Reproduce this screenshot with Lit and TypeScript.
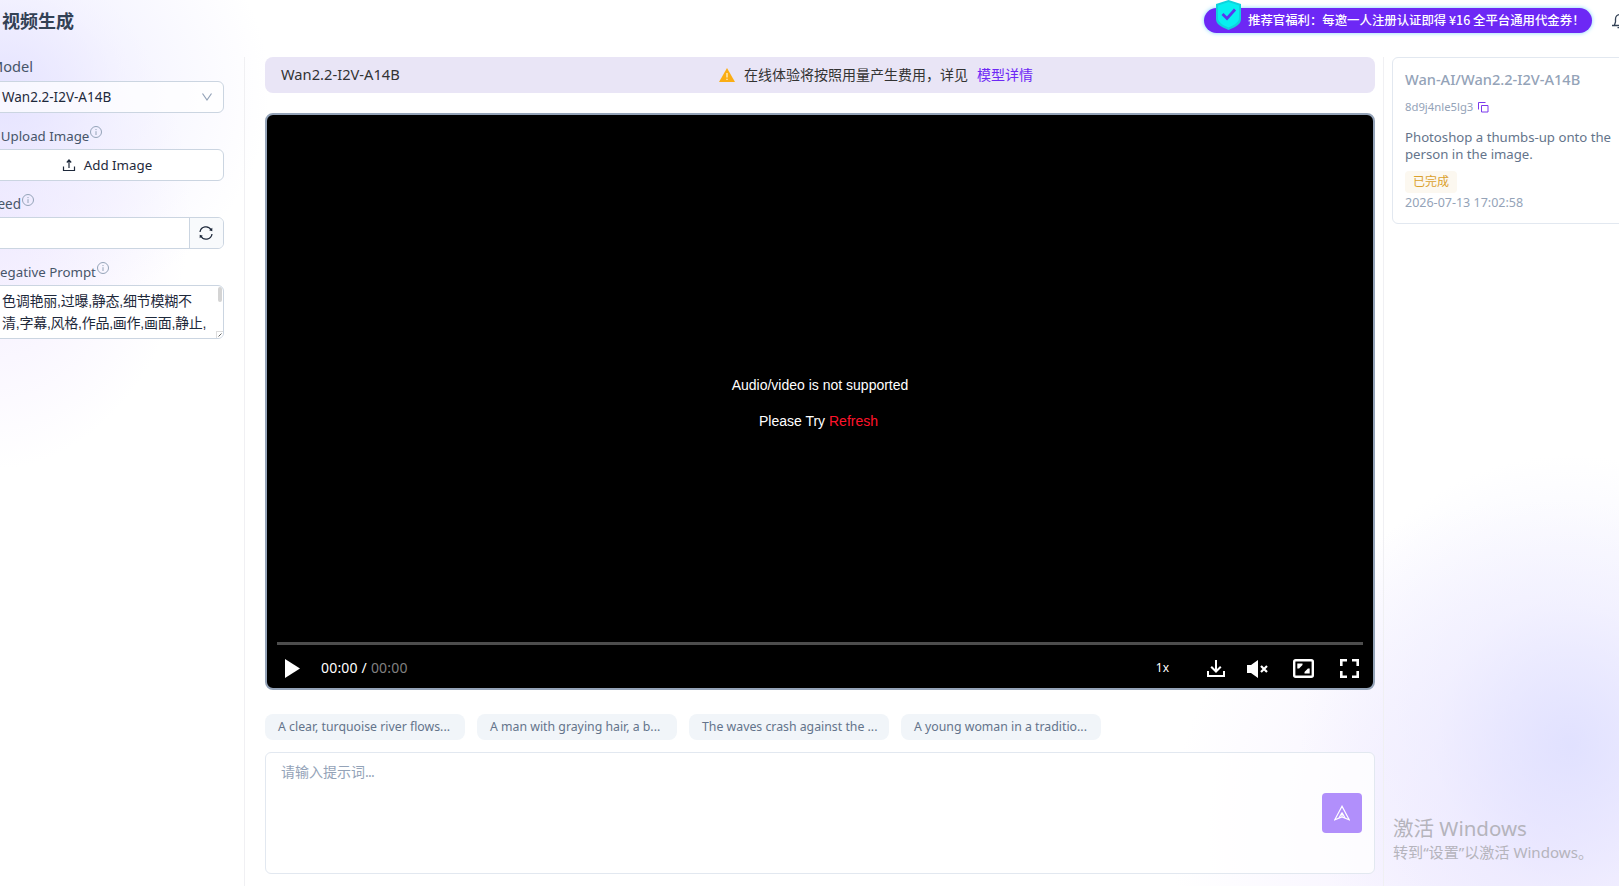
import { LitElement, html, css } from "lit";
import { customElement, property } from "lit/decorators.js";

const infoIcon = html`<svg class="info" viewBox="0 0 12 12" fill="none" stroke="#94a3b8">
  <circle cx="6" cy="6" r="5.5"></circle>
  <path d="M6 5.2V9M6 3v1.1"></path>
</svg>`;

@customElement("side-panel")
class SidePanel extends LitElement {
  static styles = css`
    :host { display: block; }
    .form { display: flex; flex-direction: column; margin-left: -10px; width: 234px; }
    .label { height: 24px; display: flex; align-items: flex-start; font-size: 13.3px; line-height: 22px; color: #475569; white-space: pre; }
    .label.first { font-size: 14.6px; line-height: 18px; }
    .label.seedlabel { font-size: 13.5px; }
    .info { width: 12px; height: 12px; margin: 1px 0 0 1px; }
    .control { box-sizing: border-box; height: 32px; border: 1px solid #cbd5e1; border-radius: 6px; display: flex; align-items: center; margin-bottom: 12px; color: #1e293b; font-size: 13.5px; }
    .select { padding: 0 10px 0 11px; justify-content: space-between; background: rgba(255, 255, 255, 0.7); }
    .chev { width: 12px; height: 10px; }
    .button { background: #fff; justify-content: center; gap: 8px; font-size: 13.3px; line-height: 30px; padding-bottom: 1px; }
    .up { width: 14px; height: 14px; }
    .seed { background: #fff; justify-content: flex-end; overflow: hidden; }
    .refresh { width: 33px; height: 30px; border-left: 1px solid #cbd5e1; background: #f8fafc; display: flex; align-items: center; justify-content: center; }
    .refresh svg { width: 16px; height: 16px; margin-right: 2px; }
    .area { position: relative; box-sizing: border-box; height: 54px; border: 1px solid #cbd5e1; border-radius: 6px; background: #fff; padding: 4px 11px; font-size: 14px; line-height: 22px; color: #1e293b; white-space: pre; font-family: "Liberation Sans", "Noto Sans CJK SC", sans-serif; letter-spacing: -0.25px; overflow: hidden; }
    .thumb { position: absolute; right: 1px; top: 1px; width: 4px; height: 15px; border-radius: 2px; background: #d4d4d4; }
    .grip { position: absolute; right: 0; bottom: 0; width: 6px; height: 6px; background: #fff; border: 1px solid #ddd; border-width: 1px 0 0 1px; }
    .grip svg { display: block; width: 5px; height: 5px; }
  `;
  render() {
    return html`<div class="form">
      <div class="label first"><span>Model</span></div>
      <div class="control select"><span>Wan2.2-I2V-A14B</span>
        <svg class="chev" viewBox="0 0 12 10" fill="none" stroke="#94a3b8" stroke-width="1.2"><path d="M1.5 1.5 6 8l4.500-6.500"></path></svg>
      </div>
      <div class="label"><span>* Upload Image</span>${infoIcon}</div>
      <div class="control button">
        <svg class="up" viewBox="0 0 14 14" fill="none" stroke="#1e293b" stroke-width="1.200"><path d="M1.500 8.500v4h11v-4M7 10V2.500M4.800 4.500 7 2l2.200 2.500"></path></svg>
        <span>Add Image</span>
      </div>
      <div class="label seedlabel"><span>Seed</span>${infoIcon}</div>
      <div class="control seed"><div class="refresh">
        <svg viewBox="0 0 16 16" fill="none" stroke="#1e293b" stroke-width="1.300"><path d="M2 7a6 6 0 0 1 11.200-2M14 9a6 6 0 0 1-11.200 2"></path><path d="M14.300 2.800v3.400l-3.100-.9zM1.700 13.200V9.800l3.100.9z" fill="#1e293b" stroke="none"></path></svg>
      </div></div>
      <div class="label"><span>Negative Prompt</span>${infoIcon}</div>
      <div class="area">色调艳丽,过曝,静态,细节模糊不
清,字幕,风格,作品,画作,画面,静止,<div class="thumb"></div><div class="grip"><svg viewBox="0 0 5 5"><path d="m1.500 4.500 3-3" stroke="#666"></path></svg></div></div>
    </div>`;
  }
}

@customElement("video-player")
class VideoPlayer extends LitElement {
  static styles = css`
    :host { display: flex; flex-direction: column; box-sizing: border-box; height: 577px; border: 2px solid #94a3b8; border-radius: 8px; background: #000; overflow: hidden; color: #fff; }
    .message { flex: 1; display: flex; flex-direction: column; align-items: center; padding-top: 252px; font: 14px/36px "Liberation Sans", sans-serif; }
    .refresh { color: #ff142b; }
    .retry { margin-left: -3px; }
    .track { height: 3px; margin: 0 10px; background: #4d4d4d; }
    .controls { height: 43px; display: flex; align-items: center; padding: 4px 14px 0 18px; box-sizing: border-box; }
    .controls svg { flex: none; }
    .time { margin: -2px auto 0 21px; font-size: 14px; letter-spacing: 0.2px; }
    .total { color: #808080; }
    .speed { font-size: 12px; margin: -3px 38px 0 0; }
    .download { margin-right: 22px; }
    .mute { margin-right: 25px; }
    .web { margin-right: 26px; }
  `;
  render() {
    return html`
      <div class="message"><div>Audio/video is not supported</div><div class="retry">Please Try <span class="refresh">Refresh</span></div></div>
      <div class="track"></div>
      <div class="controls">
        <svg width="15" height="19" viewBox="0 0 15 19"><path d="M0 0 15 9.500 0 19z" fill="#fff"></path></svg>
        <div class="time">00:00 / <span class="total">00:00</span></div>
        <span class="speed">1x</span>
        <svg class="download" width="18" height="17" viewBox="0 0 18 17" fill="none" stroke="#fff" stroke-width="2"><path d="M1 11v5h16v-5M9 0v11M4.200 6.800 9 11.500l4.800-4.700"></path></svg>
        <svg class="mute" width="21" height="18" viewBox="0 0 21 18"><path d="M0 5h4l7-5v18l-7-5H0z" fill="#fff"></path><path d="m14 6 6 6m0-6-6 6" stroke="#fff" stroke-width="2.200"></path></svg>
        <svg class="web" width="21" height="19" viewBox="0 0 21 19"><rect x="1.200" y="1.200" width="18.600" height="16.600" rx="1.500" fill="none" stroke="#fff" stroke-width="2.400"></rect><path d="M4.300 4.500h5.200v1.500l-3.400 3.500H4.300zM16.700 14.500h-5.200V13l3.400-3.500h1.800z" fill="#fff"></path></svg>
        <svg width="19" height="19" viewBox="0 0 19 19" fill="none" stroke="#fff" stroke-width="2.600"><path d="M1.300 7V1.300H7M12 1.300h5.700V7M17.700 12v5.700H12M7 17.700H1.300V12"></path></svg>
      </div>`;
  }
}

@customElement("prompt-chip")
class PromptChip extends LitElement {
  @property() text = "";
  static styles = css`
    :host { box-sizing: border-box; width: 200px; height: 26px; border-radius: 8px; background: #f1f5f9; padding: 0 12px 0 13px; font-size: 12.3px; line-height: 25px; color: #64748b; white-space: pre; }
  `;
  render() { return html`${this.text}`; }
}

@customElement("history-card")
class HistoryCard extends LitElement {
  static styles = css`
    :host { display: flex; flex-direction: column; align-items: flex-start; box-sizing: border-box; width: 260px; height: 167px; border: 1px solid #e2e8f0; border-radius: 6px; background: #fff; padding: 10px 12px; color: #94a3b8; white-space: pre; }
    .title { font-size: 14.6px; line-height: 22px; font-weight: 500; }
    .id { display: flex; align-items: center; gap: 5px; font-size: 11.3px; line-height: 16px; margin-top: 9px; }
    .desc { font-size: 13.200px; line-height: 17px; color: #64748b; margin-top: 14px; }
    .tag { background: #fcf8f0; color: #dba12d; font-size: 12px; line-height: 22px; height: 22px; padding: 0 8px; border-radius: 4px; margin-top: 8px; }
    .date { font-size: 12.5px; line-height: 16px; margin-top: 2px; }
  `;
  render() {
    return html`
      <div class="title">Wan-AI/Wan2.2-I2V-A14B</div>
      <div class="id"><span>8d9j4nle5lg3</span>
        <svg width="11" height="11" viewBox="0 0 11 11" fill="none" stroke="#7c3aed"><path d="M3.500 3.500h6.500v6.500H3.500zM.5 7.500v-7h7"></path></svg></div>
      <div class="desc">Photoshop a thumbs-up onto the
person in the image.</div>
      <div class="tag">已完成</div>
      <div class="date">2026-07-13 17:02:58</div>`;
  }
}

@customElement("app-root")
class AppRoot extends LitElement {
  static styles = css`
    :host {
      display: grid; grid-template-columns: 245px 1139px 235px; grid-template-rows: 57px 829px;
      position: relative; width: 1619px; height: 886px; overflow: hidden;
      font-family: "Noto Sans", "Noto Sans CJK SC", sans-serif;
      background:
        radial-gradient(ellipse 270px 230px at 0px 90px, rgba(222, 221, 255, 0.75), rgba(232, 231, 255, 0.45) 45%, rgba(255, 255, 255, 0) 100%),
        radial-gradient(ellipse 200px 260px at -10px 210px, rgba(238, 228, 255, 0.7), rgba(255, 255, 255, 0) 100%),
        radial-gradient(ellipse 270px 290px at 1570px 745px, rgba(218, 220, 255, 0.75), rgba(232, 232, 255, 0.45) 50%, rgba(255, 255, 255, 0) 100%),
        radial-gradient(ellipse 370px 330px at 1540px 830px, rgba(238, 230, 255, 0.8), rgba(255, 255, 255, 0) 100%),
        #fff;
    }
    .header { grid-column: 1 / 4; display: flex; align-items: flex-start; }
    .heading { margin: 8px auto 0 2px; font-size: 18px; line-height: 26px; font-weight: 700; color: #334155; }
    .promo { position: relative; box-sizing: border-box; margin: 8px 20px 0 0; width: 388px; height: 25px; border-radius: 13px; background: #6d28f5; box-shadow: 0 0 4px #7dd3fc; padding-left: 44px; font-size: 12.400px; line-height: 24px; font-weight: 500; color: #fff; white-space: pre; font-family: "Noto Sans CJK SC", sans-serif; }
    .shield { position: absolute; left: 11px; top: -8px; width: 27px; height: 30px; }
    .bell { flex: none; width: 16px; height: 16px; margin: 13px -9px 0 0; }
    .side { border-right: 1px solid #f0f0f3; box-sizing: border-box; }
    .main { padding: 0 8px 0 20px; display: flex; flex-direction: column; border-right: 1px solid #f0f0f3; }
    .notice { height: 36px; border-radius: 8px; background: #e9e5f6; display: grid; grid-template-columns: 438px auto; align-items: center; padding-left: 16px; margin-bottom: 20px; color: #333; font-size: 14.700px; }
    .name { line-height: 20px; margin-top: -2px; }
    .cost { display: flex; align-items: center; font-size: 14px; line-height: 22px; }
    .cost svg { margin-right: 9px; }
    .link { color: #6d28f5; margin-left: 9px; }
    .chips { display: flex; gap: 12px; margin: 24px 0 12px; }
    .prompt { height: 122px; box-sizing: border-box; border: 1px solid #e2e8f0; border-radius: 6px; background: rgba(255, 255, 255, 0.75); padding: 9px 12px 0 15px; display: flex; justify-content: space-between; font-size: 14px; line-height: 20px; color: #94a3b8; }
    .dots { letter-spacing: -0.8px; }
    .send { width: 40px; height: 40px; margin-top: 31px; background: #b18ffb; border-radius: 4px; display: flex; align-items: center; justify-content: center; }
    .history { padding-left: 8px; }
    .watermark { position: absolute; left: 1393px; top: 814px; color: #b5b4bc; font-size: 20.500px; line-height: 28px; white-space: pre; }
    .watermark .small { font-size: 15.100px; line-height: 20px; }
  `;
  private prompts = ["A clear, turquoise river flows...", "A man with graying hair, a b...", "The waves crash against the ...", "A young woman in a traditio..."];
  render() {
    return html`
      <div class="header">
        <div class="heading">视频生成</div>
        <div class="promo">推荐官福利：每邀一人注册认证即得 ¥16 全平台通用代金券！
          <svg class="shield" viewBox="0 0 27 30"><path d="M13.500 0 26 4v15c0 5-5 8-12.500 11C6 27 1 24 1 19V4z" fill="#0fd3dd"></path><path d="M13.500 2 24 5.500V18c0 4-4 7-10.500 9.500C7 25 3 22 3 18V5.500z" fill="#08f0f0"></path><path d="m7.500 14 4.500 4.500L20 9.500" fill="none" stroke="#5b35ee" stroke-width="2.800"></path></svg>
        </div>
        <svg class="bell" viewBox="0 0 16 16" fill="none" stroke="#334155" stroke-width="1.300"><path d="M0 12.500h15M2.300 12.500 3.500 9V6a4.500 4.500 0 0 1 9 0v3l1.200 3.500M5.500 14.700h5M8 0v2"></path></svg>
      </div>
      <div class="side"><side-panel></side-panel></div>
      <div class="main">
        <div class="notice"><span class="name">Wan2.2-I2V-A14B</span>
          <div class="cost"><svg width="16" height="14" viewBox="0 0 16 14"><path d="M8 0 16 14H0z" fill="#faad14"></path><path d="M8 5v4.500M8 10.800v1.200" stroke="#fff0c8" stroke-width="1.300"></path></svg>在线体验将按照用量产生费用，详见<span class="link">模型详情</span></div>
        </div>
        <video-player></video-player>
        <div class="chips">${this.prompts.map((p) => html`<prompt-chip .text=${p}></prompt-chip>`)}</div>
        <div class="prompt"><span>请输入提示词<span class="dots">...</span></span>
          <div class="send"><svg width="16" height="16" viewBox="0 0 16 16" fill="none" stroke="#fff" stroke-width="1.200"><path d="M8 1.200.8 14.800 8 12l7.200 2.800zM8 7.500 4.800 13.200M8 7.500l3.200 5.700M8 7.500V12"></path></svg></div>
        </div>
      </div>
      <div class="history"><history-card></history-card></div>
      <div class="watermark">激活 Windows<div class="small">转到“设置”以激活 Windows。</div></div>`;
  }
}
